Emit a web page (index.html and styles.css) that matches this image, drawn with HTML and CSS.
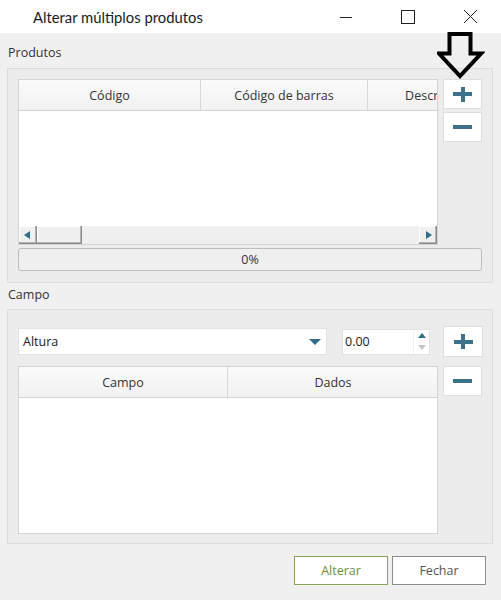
FILE: index.html
```html
<!DOCTYPE html>
<html lang="pt">
<head>
<meta charset="utf-8">
<title>Alterar múltiplos produtos</title>
<link rel="stylesheet" href="styles.css">
</head>
<body>
<div class="window">
  <div class="titlebar">
    <div class="title">Alterar múltiplos produtos</div>
    <div class="controls">
      <div class="ctl"><svg width="14" height="14" viewBox="0 0 14 14"><path d="M1 7.5 H13" stroke="#222" stroke-width="1"/></svg></div>
      <div class="ctl"><svg width="14" height="14" viewBox="0 0 14 14"><rect x="0.5" y="0.5" width="13" height="13" fill="none" stroke="#222" stroke-width="1"/></svg></div>
      <div class="ctl"><svg width="15" height="15" viewBox="0 0 15 15"><path d="M1 1 L14 14 M14 1 L1 14" stroke="#222" stroke-width="1"/></svg></div>
    </div>
  </div>

  <div class="label first">Produtos</div>
  <div class="group g1">
    <div class="row">
      <div class="table t1">
        <div class="thead">
          <div class="th c1">Código</div>
          <div class="th c2">Código de barras</div>
          <div class="th c3">Descrição</div>
        </div>
        <div class="tbody"></div>
        <div class="hscroll">
          <div class="sbtn"><span class="tri-left"></span></div>
          <div class="thumb"></div>
          <div class="track"></div>
          <div class="sbtn"><span class="tri-right"></span></div>
        </div>
      </div>
      <div class="side">
        <div class="ibtn"><span class="plus"></span></div>
        <div class="ibtn"><span class="minus"></span></div>
      </div>
    </div>
    <div class="progress">0%</div>
  </div>

  <div class="label second">Campo</div>
  <div class="group g2">
    <div class="grid">
      <div class="inputs">
        <div class="combo"><span class="ctext">Altura</span><span class="tri-down"></span></div>
        <div class="spin"><span class="stext">0.00</span>
          <div class="spinbtns"><span class="up"></span><span class="down"></span></div>
        </div>
      </div>
      <div class="ibtn tall"><span class="plus"></span></div>
      <div class="table t2">
        <div class="thead">
          <div class="th d1">Campo</div>
          <div class="th d2">Dados</div>
        </div>
        <div class="tbody"></div>
      </div>
      <div class="side">
        <div class="ibtn"><span class="minus"></span></div>
      </div>
    </div>
  </div>

  <div class="actions">
    <div class="btn primary">Alterar</div>
    <div class="btn">Fechar</div>
  </div>

  <svg class="annot" width="48" height="52" viewBox="0 0 48 52"><path d="M12.5 4 H33.5 V23.5 H44 L23 46 L2 23.5 H12.5 Z" fill="none" stroke="#000" stroke-width="4" stroke-linejoin="miter"/></svg>
</div>
</body>
</html>
```
FILE: styles.css
```css
* { box-sizing: border-box; }
html, body { margin: 0; padding: 0; }
body {
  width: 501px;
  height: 600px;
  background: #f0f0f0;
  font-family: "Open Sans", "Noto Sans", sans-serif;
  font-size: 12.5px;
  color: #333;
  overflow: hidden;
}
.window { position: relative; width: 501px; height: 600px; }

.titlebar {
  height: 33px;
  background: #fff;
  display: flex;
  align-items: center;
}
.title {
  padding-left: 33px;
  padding-top: 1px;
  font-family: "Lato", "Open Sans", sans-serif;
  font-size: 14.8px;
  color: #1b1b1b;
}
.controls { margin-left: auto; display: flex; height: 33px; }
.ctl { width: 62px; display: flex; align-items: center; justify-content: center; }

.label { padding-left: 8px; line-height: 16px; color: #333; }
.label.first { height: 35px; padding-top: 12px; }
.label.second { height: 26px; padding-top: 4px; }

.group {
  margin-left: 7px;
  width: 486px;
  border: 1px solid #dcdcdc;
  background: #ececec;
}
.g1 { padding: 10px 10px 11px 10px; height: 215px; }
.g2 { padding: 16px 10px 10px 10px; height: 235px; }

.row { display: flex; gap: 5px; }
.side { display: flex; flex-direction: column; gap: 3px; }

.ibtn {
  width: 39px;
  height: 30px;
  background: #fff;
  border: 1px solid #dedede;
  display: flex;
  align-items: center;
  justify-content: center;
}
.ibtn.tall { height: 31px; width: 40px; }
.plus { position: relative; width: 19px; height: 15px; }
.plus::before, .plus::after { content: ""; position: absolute; background: #3b7189; }
.plus::before { left: 0; right: 0; top: 5.5px; height: 4px; }
.plus::after { top: 0; bottom: 0; left: 7.5px; width: 4px; }
.minus { width: 19px; height: 4px; background: #3b7189; }

.table {
  width: 420px;
  border: 1px solid #d4d4d4;
  background: #fff;
  display: flex;
  flex-direction: column;
  overflow: hidden;
}
.t1 { height: 166px; }
.t2 { height: 168px; }
.thead {
  display: flex;
  height: 31px;
  flex: none;
  border-bottom: 1px solid #d4d4d4;
  background: linear-gradient(#fbfbfb, #f1f1f1);
}
.th {
  flex: none;
  display: flex;
  align-items: center;
  justify-content: center;
  border-right: 1px solid #d8d8d8;
  white-space: nowrap;
  color: #333;
  overflow: hidden;
}
.c1 { width: 182px; }
.c2 { width: 167px; }
.c3 { width: 132px; }
.d1 { width: 209px; }
.d2 { width: 210px; border-right: none; }
.tbody { flex: 1; background: #fff; }

.hscroll { height: 18px; flex: none; display: flex; background: #efefef; }
.sbtn, .thumb {
  background: #efefef;
  box-shadow: inset -1px -1px #8a8a8a, inset -2px -2px #b4b4b4, inset 1px 1px #fff;
}
.sbtn { width: 18px; display: flex; align-items: center; justify-content: center; }
.thumb { width: 45px; }
.track { flex: 1; background: #efefef; }
.tri-left, .tri-right { width: 0; height: 0; border-top: 4.5px solid transparent; border-bottom: 4.5px solid transparent; }
.tri-left { border-right: 6px solid #2f6d8a; margin-right: 2px; }
.tri-right { border-left: 6px solid #2f6d8a; margin-left: 1px; }

.progress {
  margin-top: 3px;
  width: 464px;
  height: 23px;
  border: 1px solid #bdbdbd;
  border-radius: 3px;
  background: #efefef;
  display: flex;
  align-items: center;
  justify-content: center;
  color: #333;
}

.grid {
  display: grid;
  grid-template-columns: 420px 40px;
  column-gap: 5px;
  row-gap: 9px;
}
.inputs { display: flex; align-items: center; gap: 15px; }
.combo {
  width: 309px;
  height: 27px;
  background: #fff;
  border: 1px solid #e2e2e2;
  display: flex;
  align-items: center;
  padding-left: 4px;
  padding-right: 3px;
}
.ctext { flex: 1; color: #222; }
.tri-down {
  width: 0; height: 0;
  border-left: 6px solid transparent;
  border-right: 6px solid transparent;
  border-top: 6px solid #2f6d8a;
  margin-right: 2px;
}
.spin {
  width: 88px;
  height: 26px;
  background: #fff;
  border: 1px solid #e2e2e2;
  display: flex;
  align-items: center;
  padding-left: 2px;
}
.stext { flex: 1; color: #222; }
.spinbtns {
  width: 16px;
  height: 24px;
  display: flex;
  flex-direction: column;
  align-items: center;
  justify-content: space-around;
  border-left: 1px solid #f0f0f0;
}
.spinbtns .up {
  width: 0; height: 0;
  border-left: 4px solid transparent;
  border-right: 4px solid transparent;
  border-bottom: 5px solid #2f6d8a;
}
.spinbtns .down {
  width: 0; height: 0;
  border-left: 4px solid transparent;
  border-right: 4px solid transparent;
  border-top: 5px solid #c6c6c6;
}

.actions {
  display: flex;
  justify-content: flex-end;
  gap: 4px;
  padding-right: 15px;
  margin-top: 12px;
}
.btn {
  width: 94px;
  height: 29px;
  background: #fff;
  border: 1px solid #8c8c8c;
  display: flex;
  align-items: center;
  justify-content: center;
  color: #555;
}
.btn.primary { border-color: #86a55a; color: #6b8f3c; }

.annot { position: absolute; left: 437px; top: 30px; }
```
